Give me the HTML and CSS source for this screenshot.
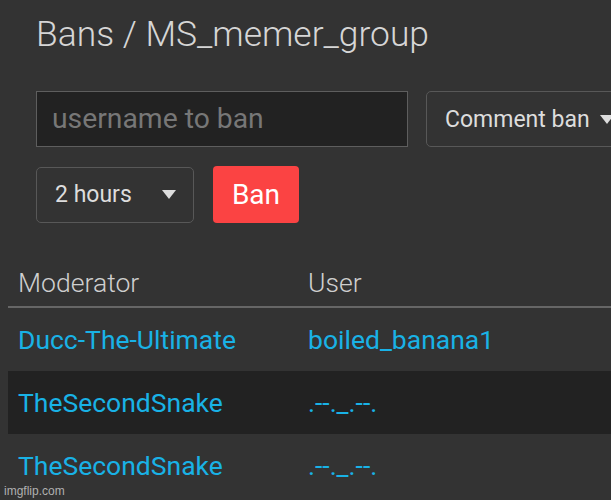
FILE: index.html
```html
<!DOCTYPE html>
<html>
<head>
<meta charset="utf-8">
<link rel="stylesheet" href="styles.css">
</head>
<body>
<div class="page">
  <div class="top">
    <h1 class="title">Bans / MS_memer_group</h1>
    <div class="row1">
      <div class="input">username to ban</div>
      <div class="select wide">Comment ban <span class="arrow"></span></div>
    </div>
    <div class="row2">
      <div class="select short">2 hours <span class="arrow"></span></div>
      <div class="btn">Ban</div>
    </div>
  </div>
  <table class="bans">
    <thead>
      <tr><th class="c1">Moderator</th><th>User</th></tr>
    </thead>
    <tbody>
      <tr><td class="c1">Ducc-The-Ultimate</td><td>boiled_banana1</td></tr>
      <tr class="alt"><td class="c1">TheSecondSnake</td><td>.--._.--.</td></tr>
      <tr><td class="c1">TheSecondSnake</td><td>.--._.--.</td></tr>
    </tbody>
  </table>
</div>
<div class="wm">imgflip.com</div>
</body>
</html>
```
FILE: styles.css
```css
html, body {
  margin: 0;
  padding: 0;
  background: #333333;
  overflow: hidden;
  height: 500px;
}
body {
  font-family: Roboto, "Liberation Sans", sans-serif;
  color: #dddddd;
  position: relative;
}
.page {
  padding-left: 8px;
  overflow: hidden;
}
.top {
  padding-left: 28px;
}
.title {
  margin: 0;
  padding-top: 13px;
  font-weight: 300;
  font-size: 35.4px;
  line-height: 42px;
  color: #d6d6d6;
}
.row1 {
  display: flex;
  gap: 18px;
  margin-top: 36px;
  white-space: nowrap;
}
.input {
  box-sizing: border-box;
  width: 372px;
  height: 56px;
  background: #222222;
  border: 1.5px solid #5e5e5e;
  color: #777777;
  font-size: 28.3px;
  font-weight: 400;
  line-height: 53px;
  padding-left: 15px;
  flex: none;
}
.select {
  box-sizing: border-box;
  height: 56px;
  border: 1.5px solid #585858;
  border-radius: 5px;
  font-size: 23px;
  line-height: 53px;
  color: #dddddd;
  display: flex;
  align-items: center;
  flex: none;
}
.select.wide {
  width: 220px;
  padding-left: 18px;
}
.select.short {
  width: 158px;
  padding-left: 18px;
}
.arrow {
  display: inline-block;
  width: 0;
  height: 0;
  border-left: 7.5px solid transparent;
  border-right: 7.5px solid transparent;
  border-top: 9px solid #dddddd;
}
.select.wide .arrow {
  margin-left: 10px;
}
.select.short .arrow {
  margin-left: 30px;
}
.row2 {
  display: flex;
  gap: 19px;
  margin-top: 19px;
  align-items: center;
}
.btn {
  box-sizing: border-box;
  width: 86px;
  height: 57px;
  background: #fb4343;
  border-radius: 4px;
  color: #ffffff;
  font-size: 28px;
  line-height: 57px;
  text-align: center;
}
.bans {
  border-collapse: collapse;
  width: 603px;
  margin-top: 35px;
}
.bans th {
  text-align: left;
  font-weight: 300;
  font-size: 26.6px;
  color: #cfcfcf;
  height: 48px;
  padding: 0 10px;
  vertical-align: middle;
  border-bottom: 2px solid #666666;
}
.bans .c1 {
  width: 270px;
}
.bans td {
  font-size: 26.5px;
  color: #19b2e6;
  height: 63px;
  padding: 0 10px;
  vertical-align: middle;
}
.bans tr.alt td {
  background: #222222;
}
.wm {
  position: absolute;
  left: 4px;
  top: 484px;
  font-size: 12px;
  color: #b0b0b0;
  font-family: "Liberation Sans", Arial, sans-serif;
}
```
